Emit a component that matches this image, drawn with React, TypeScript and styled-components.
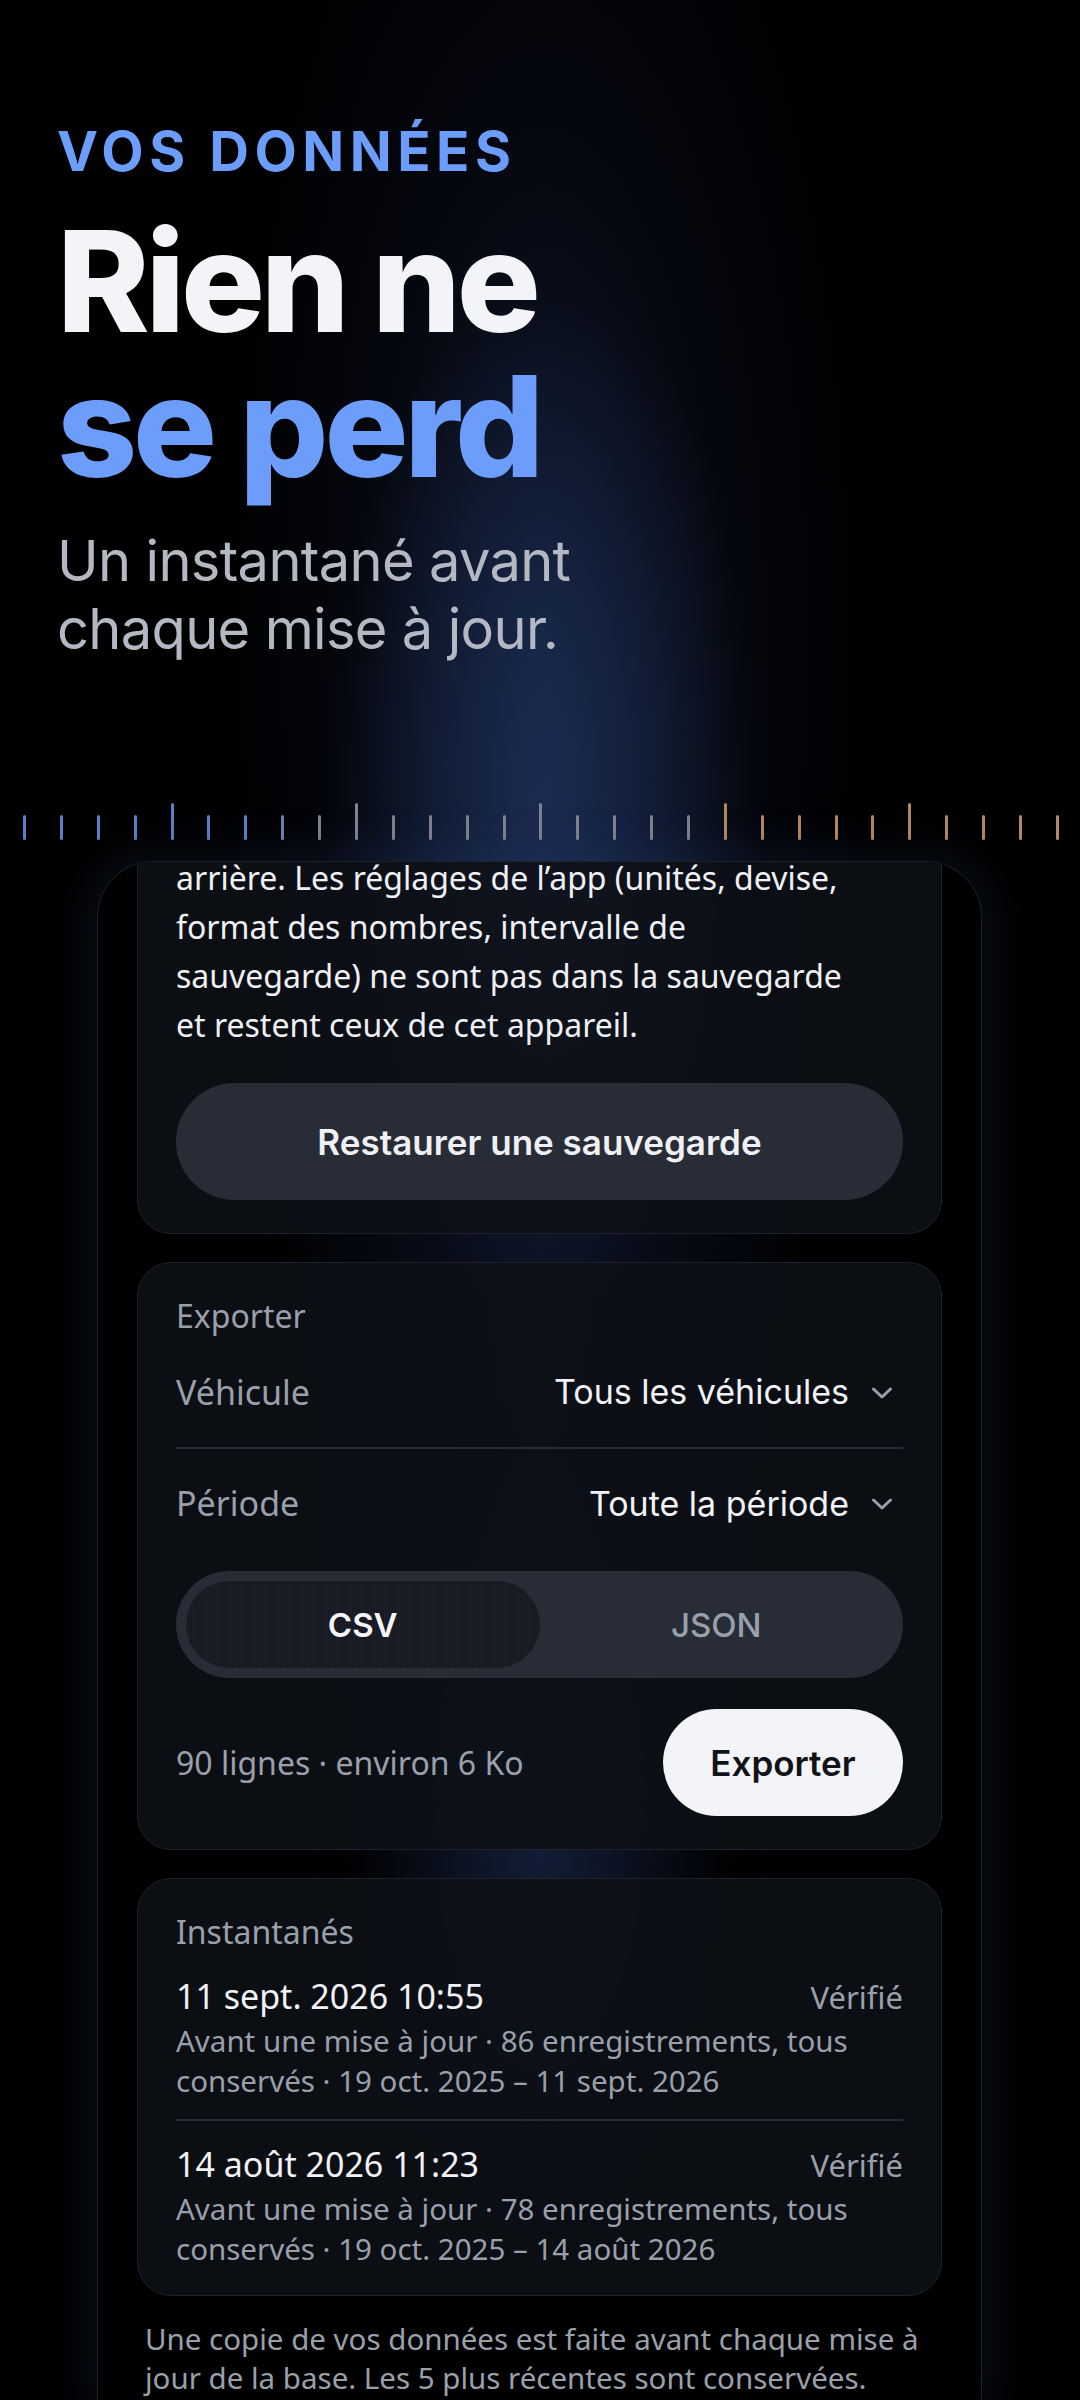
import React from 'react';
import styled, {createGlobalStyle} from 'styled-components';

const GlobalStyle = createGlobalStyle`
    html, body {
        margin: 0;
        padding: 0;
        background: #000;
    }
    body {
        width: 1080px;
        height: 2400px;
        overflow: hidden;
        -webkit-font-smoothing: antialiased;
    }
    * {
        box-sizing: border-box;
    }
`;

const HEAD = `Inter, "Noto Sans", sans-serif`;
const BODY = `"Noto Sans", "Open Sans", sans-serif`;

type TickTone = 'blue' | 'mist' | 'gray' | 'amber';

const toneColor: Record<TickTone, string> = {
    blue: '#5a80c8',
    mist: '#6e83ab',
    gray: '#7e838d',
    amber: '#b5875f',
};

const ticks: {tone: TickTone; tall: boolean}[] = Array.from({length: 29}, (_, i) => ({
    tone: i < 7 ? 'blue' : i === 7 ? 'mist' : i < 19 ? 'gray' : 'amber',
    tall: i % 5 === 4,
}));

const snapshots = [
    {
        date: '11 sept. 2026 10:55',
        detail: 'Avant une mise à jour · 86 enregistrements, tous conservés · 19 oct. 2025 – 11 sept. 2026',
    },
    {
        date: '14 août 2026 11:23',
        detail: 'Avant une mise à jour · 78 enregistrements, tous conservés · 19 oct. 2025 – 14 août 2026',
    },
];

function Chevron() {
    return (
        <ChevronIcon width="22" height="12" viewBox="0 0 22 12" fill="none">
            <polyline points="2.5,2 11,10 19.5,2" stroke="#9aa0ab" strokeWidth="3" strokeLinecap="round" strokeLinejoin="round"/>
        </ChevronIcon>
    );
}

function App() {
    return (
        <>
            <GlobalStyle/>
            <Page>
                <Hero>
                    <Eyebrow>VOS DONNÉES</Eyebrow>
                    <Headline>
                        Rien ne<br/>
                        <Accent>se perd</Accent>
                    </Headline>
                    <Subtitle>Un instantané avant<br/>chaque mise à jour.</Subtitle>
                </Hero>

                <Ruler>
                    {ticks.map((tick, i) => (
                        <Tick key={i} $tone={tick.tone} $tall={tick.tall}/>
                    ))}
                </Ruler>

                <Frame>
                    <ScrollArea>
                        <Card $variant="first">
                            <Paragraph>
                                arrière. Les réglages de l’app (unités, devise, format des nombres, intervalle de
                                sauvegarde) ne sont pas dans la sauvegarde et restent ceux de cet appareil.
                            </Paragraph>
                            <GhostButton>Restaurer une sauvegarde</GhostButton>
                        </Card>

                        <Card>
                            <CardLabel>Exporter</CardLabel>
                            <SelectRow $divided>
                                <SelectLabel>Véhicule</SelectLabel>
                                <SelectValue>Tous les véhicules<Chevron/></SelectValue>
                            </SelectRow>
                            <SelectRow>
                                <SelectLabel>Période</SelectLabel>
                                <SelectValue>Toute la période<Chevron/></SelectValue>
                            </SelectRow>
                            <Segmented>
                                <Segment $active>CSV</Segment>
                                <Segment>JSON</Segment>
                            </Segmented>
                            <ExportRow>
                                <Meta>90 lignes · environ 6 Ko</Meta>
                                <PrimaryButton>Exporter</PrimaryButton>
                            </ExportRow>
                        </Card>

                        <Card $variant="last">
                            <CardLabel>Instantanés</CardLabel>
                            {snapshots.map(snapshot => (
                                <Snapshot key={snapshot.date}>
                                    <SnapshotHead>
                                        <SnapshotDate>{snapshot.date}</SnapshotDate>
                                        <Verified>Vérifié</Verified>
                                    </SnapshotHead>
                                    <SnapshotDetail>{snapshot.detail}</SnapshotDetail>
                                </Snapshot>
                            ))}
                        </Card>

                        <Footnote>
                            Une copie de vos données est faite avant chaque mise à jour de la base. Les 5 plus
                            récentes sont conservées.
                        </Footnote>
                    </ScrollArea>
                </Frame>
            </Page>
        </>
    );
}

const Page = styled.div`
    position: relative;
    width: 1080px;
    height: 2400px;
    overflow: hidden;
    display: flex;
    flex-direction: column;
    padding-top: 124px;
    background:
        radial-gradient(ellipse 220px 520px at 545px 800px, rgba(40, 66, 122, 0.5) 0%, rgba(40, 66, 122, 0) 100%),
        radial-gradient(ellipse 340px 1000px at 545px 640px, rgba(24, 38, 72, 0.6) 0%, rgba(16, 26, 52, 0.25) 55%, rgba(0, 0, 0, 0) 100%),
        radial-gradient(ellipse 180px 420px at 540px 1860px, rgba(34, 56, 104, 0.45) 0%, rgba(0, 0, 0, 0) 100%),
        radial-gradient(ellipse 280px 900px at 540px 1350px, rgba(22, 36, 70, 0.4) 0%, rgba(0, 0, 0, 0) 100%),
        #000;
`;

const Hero = styled.header`
    display: flex;
    flex-direction: column;
    padding: 0 57px;
`;

const Eyebrow = styled.div`
    font-family: ${HEAD};
    font-size: 55px;
    line-height: 55px;
    font-weight: 700;
    letter-spacing: 0.1em;
    color: #6d9dfb;
`;

const Headline = styled.h1`
    margin: 30px 0 0;
    font-family: ${HEAD};
    font-size: 140px;
    line-height: 145px;
    font-weight: 800;
    letter-spacing: -0.03em;
    color: #f3f4f7;
`;

const Accent = styled.span`
    color: #6d9dfb;
`;

const Subtitle = styled.p`
    margin: 28px 0 0;
    font-family: ${HEAD};
    font-size: 56px;
    line-height: 68px;
    font-weight: 400;
    letter-spacing: -0.012em;
    color: #b4b8c2;
`;

const Ruler = styled.div`
    display: flex;
    align-items: flex-end;
    justify-content: space-between;
    height: 37px;
    margin-top: 140px;
    padding: 0 21px 0 23px;
`;

const Tick = styled.span<{$tone: TickTone; $tall: boolean}>`
    width: 3px;
    height: ${p => (p.$tall ? 37 : 25)}px;
    border-radius: 1.5px;
    background: ${p => toneColor[p.$tone]};
`;

const Frame = styled.section`
    flex: 1;
    margin: 21px 98px 0 97px;
    border: 1.5px solid #1b212d;
    border-bottom: none;
    border-radius: 56px 56px 0 0;
    overflow: hidden;
    box-shadow: 0 0 46px 10px rgba(46, 70, 120, 0.2);
`;

const ScrollArea = styled.div`
    display: flex;
    flex-direction: column;
    gap: 28px;
    margin-top: -48px;
    padding: 0 39px;
`;

const cardPadding = {
    first: '38px 38px 33px',
    middle: '33px 38px 33px',
    last: '33px 38px 26px',
};

const Card = styled.div<{$variant?: keyof typeof cardPadding}>`
    display: flex;
    flex-direction: column;
    padding: ${p => cardPadding[p.$variant ?? 'middle']};
    border: 1.5px solid #1c212c;
    border-radius: 34px;
    background: rgba(13, 16, 22, 0.86);
`;

const Paragraph = styled.p`
    margin: 0;
    max-width: 700px;
    font-family: ${BODY};
    font-size: 32px;
    line-height: 49px;
    color: #eef0f4;
`;

const GhostButton = styled.button`
    margin-top: 34px;
    height: 117px;
    border: none;
    border-radius: 999px;
    background: #282c36;
    font-family: ${HEAD};
    font-size: 35px;
    font-weight: 600;
    color: #eef0f4;
`;

const CardLabel = styled.div`
    font-family: ${BODY};
    font-size: 32px;
    line-height: 40px;
    color: #9aa0ab;
`;

const SelectRow = styled.div<{$divided?: boolean}>`
    display: flex;
    align-items: center;
    justify-content: space-between;
    height: ${p => (p.$divided ? 113 : 108)}px;
    border-bottom: ${p => (p.$divided ? '2px solid #262b35' : 'none')};
`;

const SelectLabel = styled.span`
    font-family: ${BODY};
    font-size: 34px;
    color: #9aa0ab;
`;

const SelectValue = styled.span`
    display: flex;
    align-items: center;
    gap: 22px;
    padding-right: 10px;
    font-family: ${HEAD};
    font-size: 34px;
    font-weight: 400;
    color: #f1f2f5;
`;

const ChevronIcon = styled.svg`
    display: block;
    margin-top: 2px;
`;

const Segmented = styled.div`
    display: grid;
    grid-template-columns: 1fr 1fr;
    margin-top: 14px;
    height: 107px;
    padding: 10px;
    border-radius: 999px;
    background: #282c36;
`;

const Segment = styled.div<{$active?: boolean}>`
    display: flex;
    align-items: center;
    justify-content: center;
    border-radius: 999px;
    font-family: ${HEAD};
    font-size: 33px;
    font-weight: ${p => (p.$active ? 600 : 500)};
    color: ${p => (p.$active ? '#f4f5f8' : '#9aa0ab')};
    background: ${p => (p.$active
        ? 'repeating-linear-gradient(90deg, rgba(255,255,255,0.025) 0 1px, rgba(0,0,0,0) 1px 3px), #171a23'
        : 'transparent')};
`;

const ExportRow = styled.div`
    display: flex;
    align-items: center;
    justify-content: space-between;
    margin-top: 31px;
`;

const Meta = styled.span`
    font-family: ${BODY};
    font-size: 32px;
    color: #9aa0ab;
`;

const PrimaryButton = styled.button`
    width: 240px;
    height: 107px;
    border: none;
    border-radius: 999px;
    background: #f3f4f7;
    font-family: ${HEAD};
    font-size: 35px;
    font-weight: 600;
    color: #111318;
`;

const Snapshot = styled.div`
    display: flex;
    flex-direction: column;
    gap: 2px;
    padding: 21px 0 18px;

    & + & {
        padding-top: 20px;
        border-top: 2px solid #262b35;
    }
    &:last-child {
        padding-bottom: 0;
    }
`;

const SnapshotHead = styled.div`
    display: flex;
    align-items: baseline;
    justify-content: space-between;
`;

const SnapshotDate = styled.span`
    font-family: ${BODY};
    font-size: 34px;
    line-height: 46px;
    color: #f1f2f5;
`;

const Verified = styled.span`
    font-family: ${BODY};
    font-size: 31px;
    color: #9aa0ab;
`;

const SnapshotDetail = styled.div`
    font-family: ${BODY};
    font-size: 29.5px;
    line-height: 40px;
    color: #9aa0ab;
`;

const Footnote = styled.p`
    margin: -5px 0 0;
    padding: 0 8px;
    font-family: ${BODY};
    font-size: 29.5px;
    line-height: 39px;
    color: #9aa0ab;
`;

export default App;
